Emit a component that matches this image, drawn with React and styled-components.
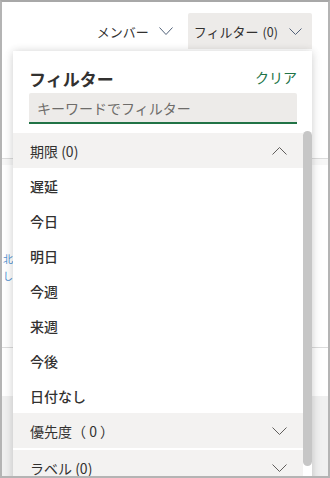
import React from "react";
import styled, { createGlobalStyle } from "styled-components";

const Global = createGlobalStyle`
  html, body { margin: 0; padding: 0; background: #ffffff; }
  body { font-family: "Noto Sans CJK JP", "Noto Sans", sans-serif; color: #323130; }
  * { box-sizing: border-box; }
`;

const Frame = styled.div`
  position: relative;
  width: 330px;
  height: 478px;
  border: 2px solid #b4b4b4;
  border-top-color: #a8a8a8;
  overflow: hidden;
  background: #ffffff;
  display: flex;
  flex-direction: column;
`;

const TopBar = styled.div`
  display: flex;
  justify-content: flex-end;
  align-items: stretch;
  gap: 15px;
  padding: 11px 16px 0 0;
  height: 48px;
`;

const BarButton = styled.div`
  display: flex;
  align-items: center;
  gap: ${(p) => (p.$active ? "11px" : "10px")};
  padding: ${(p) => (p.$active ? "0 10px 0 6px" : "0 0 0 0")};
  background: ${(p) => (p.$active ? "#edebe9" : "transparent")};
  border-radius: 2px 2px 0 0;
  font-size: 13px;
  color: #323130;
  white-space: nowrap;
`;

const Count = styled.span`
  font-size: 12.5px;
  margin-left: 4px;
`;

const Content = styled.div`
  flex: 1;
  display: flex;
  flex-direction: column;
`;

const BgRow = styled.div`
  flex: none;
  height: ${(p) => p.$h}px;
  border-bottom: ${(p) => (p.$line ? "1px solid #dcdcdc" : "none")};
  background: ${(p) => p.$bg || "transparent"};
  padding-top: ${(p) => p.$pt || 0}px;
  display: flex;
  flex-direction: column;
`;

const BgLinkClip = styled.div`
  width: 11px;
  display: flex;
  flex-direction: column;
  gap: 4px;
  padding-left: 1px;
`;

const BgLink = styled.div`
  font-size: 10px;
  line-height: 13px;
  color: #4f8fd0;
  white-space: nowrap;
`;

const Panel = styled.div`
  position: absolute;
  top: 49px;
  left: 11px;
  width: 299px;
  height: 440px;
  background: #ffffff;
  box-shadow: 0 0 8px rgba(0, 0, 0, 0.13), 0 3px 12px rgba(0, 0, 0, 0.08);
  display: flex;
  flex-direction: column;
`;

const PanelHead = styled.div`
  padding: 15px 15px 9px 16px;
  display: flex;
  flex-direction: column;
  gap: 3px;
`;

const TitleRow = styled.div`
  display: flex;
  justify-content: space-between;
  align-items: center;
  height: 24px;
`;

const Title = styled.div`
  font-size: 17px;
  font-weight: 700;
  color: #323130;
`;

const Clear = styled.div`
  font-size: 14px;
  color: #217346;
  margin-top: -2px;
`;

const Search = styled.div`
  height: 31px;
  background: #edebe9;
  border-bottom: 2px solid #217346;
  border-radius: 2px 2px 0 0;
  display: flex;
  align-items: center;
  padding-left: 8px;
  font-size: 14px;
  color: #6e6c6a;
`;

const Scroller = styled.div`
  flex: 1;
  display: flex;
`;

const List = styled.div`
  flex: 1;
  display: flex;
  flex-direction: column;
`;

const Track = styled.div`
  width: 9px;
  display: flex;
  flex-direction: column;
`;

const Thumb = styled.div`
  margin-top: -2px;
  height: 335px;
  background: #c6c6c6;
  border-radius: 5px;
  width: 9px;
`;

const Section = styled.div`
  height: 35px;
  flex: none;
  background: #f3f2f1;
  display: flex;
  align-items: center;
  justify-content: space-between;
  padding: 0 16px 0 17px;
  font-size: 14px;
  color: #323130;
  margin-bottom: ${(p) => (p.$gap ? "2px" : "0")};
`;

const Item = styled.div`
  height: 35px;
  flex: none;
  display: flex;
  align-items: center;
  padding-left: 17px;
  font-size: 14px;
  font-weight: 500;
  color: #323130;
`;

const Chevron = ({ up, w = 15, h = 8, color = "#605e5c" }) => (
  <svg width={w} height={h} viewBox={`0 0 ${w} ${h}`} fill="none">
    <polyline
      points={up ? `0.5,${h - 0.5} ${w / 2},0.5 ${w - 0.5},${h - 0.5}` : `0.5,0.5 ${w / 2},${h - 0.5} ${w - 0.5},0.5`}
      stroke={color}
      strokeWidth="1"
    />
  </svg>
);

const items = ["遅延", "今日", "明日", "今週", "来週", "今後", "日付なし"];

export default function App() {
  return (
    <>
      <Global />
      <Frame>
        <TopBar>
          <BarButton>
            <span>メンバー</span>
            <Chevron w={14} h={8} color="#52627a" />
          </BarButton>
          <BarButton $active>
            <span>
              フィルター<Count>(0)</Count>
            </span>
            <Chevron w={13} h={7} color="#52627a" />
          </BarButton>
        </TopBar>
        <Content>
          <BgRow $h={110} $line />
          <BgRow $h={6} $bg="#f7f7f7" />
          <BgRow $h={183} $pt={87} $line>
            <BgLinkClip>
              <BgLink>北</BgLink>
              <BgLink>し</BgLink>
            </BgLinkClip>
          </BgRow>
          <BgRow $h={48} />
          <BgRow $h={80} $bg="#f0f0f0" />
        </Content>
        <Panel>
          <PanelHead>
            <TitleRow>
              <Title>フィルター</Title>
              <Clear>クリア</Clear>
            </TitleRow>
            <Search>キーワードでフィルター</Search>
          </PanelHead>
          <Scroller>
            <List>
              <Section>
                <span>期限 (0)</span>
                <Chevron up />
              </Section>
              {items.map((t) => (
                <Item key={t}>{t}</Item>
              ))}
              <Section $gap>
                <span>優先度（ 0 ）</span>
                <Chevron />
              </Section>
              <Section>
                <span>ラベル (0)</span>
                <Chevron />
              </Section>
            </List>
            <Track>
              <Thumb />
            </Track>
          </Scroller>
        </Panel>
      </Frame>
    </>
  );
}
